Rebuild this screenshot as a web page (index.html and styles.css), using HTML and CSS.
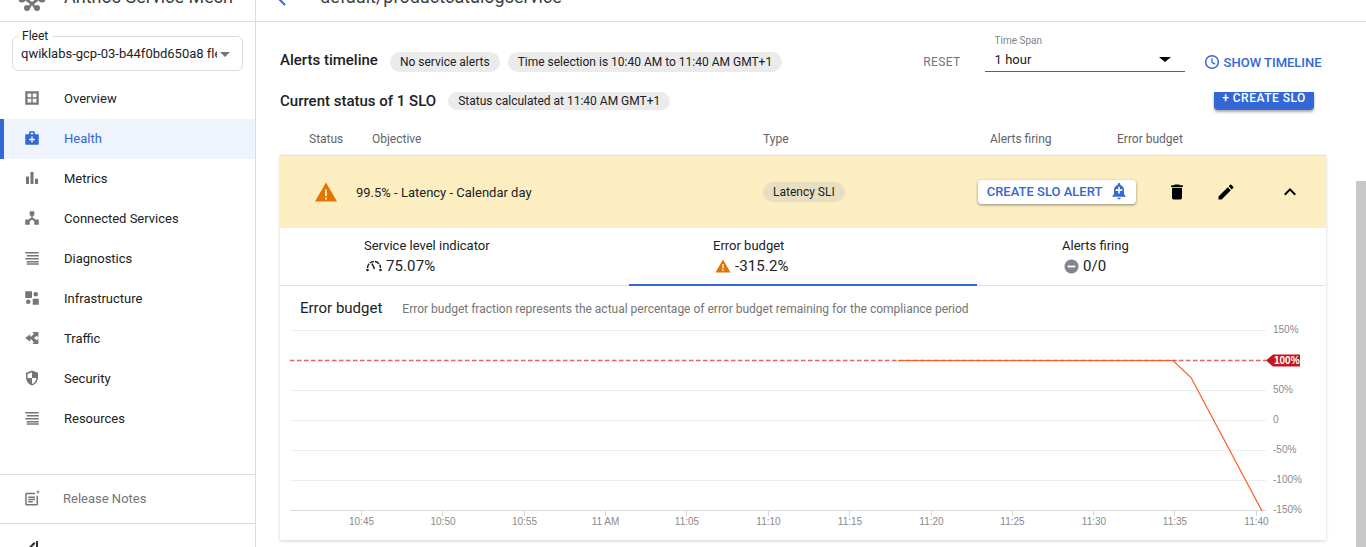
FILE: index.html
```html
<!DOCTYPE html>
<html lang="en">
<head>
<meta charset="utf-8">
<title>Anthos Service Mesh</title>
<link rel="stylesheet" href="styles.css">
</head>
<body>
<div class="app">
  <aside class="sidebar">
    <div class="side-head">
      <svg class="logo" viewBox="0 0 30 14" width="30" height="14"><g fill="#757575"><circle cx="5" cy="1" r="3.5"/><circle cx="25" cy="1" r="3.5"/><circle cx="10" cy="10" r="3"/><circle cx="20" cy="10" r="3"/><path d="M7-2 15 4l8-6 2 2-8 6 3 5-2 1-3-5-3 5-2-1 3-5-8-6z"/></g></svg>
      <span class="side-title">Anthos Service Mesh</span>
    </div>
    <div class="fleet">
      <span class="fleet-label">Fleet</span>
      <span class="fleet-value">qwiklabs-gcp-03-b44f0bd650a8 fleet</span>
      <span class="fleet-caret"></span>
    </div>
    <nav class="nav">
      <a class="nav-item"><svg class="ico" viewBox="0 0 24 24"><path d="M3 3v18h18V3H3zm3 3h5v5H6V6zm7 0h5v5h-5V6zm-7 7h5v5H6v-5zm7 0h5v5h-5v-5z" fill-rule="evenodd"/></svg>Overview</a>
      <a class="nav-item active"><svg class="ico" viewBox="0 0 24 24"><path fill-rule="evenodd" d="M20 7h-4V5c0-1.100-.9-2-2-2h-4c-1.100 0-2 .9-2 2v2H4c-.6 0-1 .4-1 1v12c0 .6.4 1 1 1h16c.6 0 1-.4 1-1V8c0-.6-.4-1-1-1zM10 5h4v2h-4V5zm6 10h-3v3h-2v-3H8v-2h3v-3h2v3h3v2z"/></svg>Health</a>
      <a class="nav-item"><svg class="ico" viewBox="0 0 24 24"><path d="M4 10h4v10H4zM10 4h4v16h-4zM16 13h4v7h-4z"/></svg>Metrics</a>
      <a class="nav-item"><svg class="ico" viewBox="0 0 24 24"><path d="M9 3h6v6h-2v2.500l5 3V14h3v7h-6v-5l-3-1.800L9 16v5H3v-7h3v.5l5-3V9H9z"/></svg>Connected Services</a>
      <a class="nav-item"><svg class="ico" viewBox="0 0 24 24"><path d="M3 4h18v2H3zM5 8h16v2H5zM3 12h18v2H3zM5 16h16v2H5zM5 19h16v2H5z"/></svg>Diagnostics</a>
      <a class="nav-item"><svg class="ico" viewBox="0 0 24 24"><path d="M3 3h9v9H3zM13 13h8v8h-8z"/><circle cx="17" cy="7" r="3"/><circle cx="7" cy="17" r="3"/></svg>Infrastructure</a>
      <a class="nav-item"><svg class="ico" viewBox="0 0 24 24"><path d="M3 12 9.500 7V10H11L14.500 6.500 12.500 4H20.500V11.500L18.500 9 14.500 12 18.500 15 20.500 12.500V20H12.500L14.500 17.500 11 14H9.500V17Z"/></svg>Traffic</a>
      <a class="nav-item"><svg class="ico" viewBox="0 0 24 24"><path fill-rule="evenodd" d="M12 2 4 5v6c0 5 3.400 9.700 8 11 4.600-1.300 8-6 8-11V5l-8-3zm0 10h6c-.5 3.700-3 7-6 8v-8H6V6.500l6-2.300V12z"/></svg>Security</a>
      <a class="nav-item"><svg class="ico" viewBox="0 0 24 24"><path d="M3 4h18v2H3zM5 8h16v2H5zM3 12h18v2H3zM5 16h16v2H5zM5 19h16v2H5z"/></svg>Resources</a>
    </nav>
    <a class="release"><svg class="ico" viewBox="0 0 24 24"><path fill-rule="evenodd" d="M3 5h13v2H5v13h13V9h2v11c0 1.100-.9 2-2 2H5c-1.100 0-2-.9-2-2V7c0-1.100.9-2 2-2zm4 5h9v2H7zm0 3h9v2H7zm0 3h6v2H7zM20 1l.8 2.200L23 4l-2.200.8L20 7l-.8-2.200L17 4l2.200-.8z"/></svg>Release Notes</a>
    <div class="collapse"><svg viewBox="0 0 24 24" width="24" height="24"><path d="M18 5v14h-2V5zM14 6l-7 7 1.500 1.500L15.500 7.500z" fill="#333"/></svg></div>
  </aside>

  <main class="main">
    <header class="topbar">
      <svg class="back" viewBox="0 0 10 14" width="10" height="14"><path d="M8 1 3 6l5 5" fill="none" stroke="#3367d6" stroke-width="2"/></svg>
      <span class="page-title">default/productcatalogservice</span>
    </header>
    <div class="content">
      <section class="row-alerts">
        <h2 class="h2 h2-alerts">Alerts timeline</h2>
        <span class="chip chip-a">No service alerts</span>
        <span class="chip chip-b">Time selection is 10:40 AM to 11:40 AM GMT+1</span>
        <span class="reset">RESET</span>
        <div class="timespan">
          <span class="ts-label">Time Span</span>
          <div class="ts-value"><span>1 hour</span><span class="ts-caret"></span></div>
        </div>
        <a class="show-timeline"><svg viewBox="0 0 24 24" width="16" height="16"><circle cx="12" cy="12" r="9.500" fill="none" stroke="#3367d6" stroke-width="2.200"/><path d="M12 6.500v6l4.500 2.700" fill="none" stroke="#3367d6" stroke-width="2"/></svg>SHOW TIMELINE</a>
      </section>
      <section class="row-status">
        <h2 class="h2">Current status of 1 SLO</h2>
        <span class="chip chip-c">Status calculated at 11:40 AM GMT+1</span>
        <div class="create-clip"><button class="create-slo">+ CREATE SLO</button></div>
      </section>
      <div class="thead">
        <span class="th th-status">Status</span>
        <span class="th th-obj">Objective</span>
        <span class="th th-type">Type</span>
        <span class="th th-alerts">Alerts firing</span>
        <span class="th th-budget">Error budget</span>
      </div>
      <section class="panel">
        <div class="slo-row">
          <svg class="warn" viewBox="0 0 24 22" width="24" height="22"><path d="M12 1.500 1 20.500h22z" fill="#e37400"/><path d="M11 8.500h2v6.500h-2zM11 16.500h2v2h-2z" fill="#fdeec2"/></svg>
          <span class="slo-name">99.5% - Latency - Calendar day</span>
          <span class="sli-chip">Latency SLI</span>
          <button class="alert-btn">CREATE SLO ALERT<svg viewBox="0 0 24 24" width="20" height="20"><path fill-rule="evenodd" fill="#3367d6" d="M12 22c1.100 0 2-.9 2-2h-4c0 1.100.9 2 2 2zm6-6v-5c0-3.100-1.600-5.600-4.500-6.300V4a1.500 1.500 0 0 0-3 0v.7C7.600 5.400 6 7.900 6 11v5l-2 2v1h16v-1l-2-2zm-2-4h-3v3h-2v-3H8v-2h3V7h2v3h3v2z"/></svg></button>
          <svg class="act act-trash" viewBox="0 0 24 24" width="20" height="20"><path d="M6 19c0 1.100.9 2 2 2h8c1.100 0 2-.9 2-2V7H6v12zM19 4h-3.500l-1-1h-5l-1 1H5v2h14V4z"/></svg>
          <svg class="act act-edit" viewBox="0 0 24 24" width="20" height="20"><path d="M3 17.250V21h3.750L17.810 9.940l-3.750-3.750L3 17.250zM20.710 7.040a1 1 0 0 0 0-1.410l-2.340-2.340a1 1 0 0 0-1.410 0l-1.830 1.830 3.750 3.750 1.830-1.830z"/></svg>
          <svg class="act act-up" viewBox="0 0 24 24" width="24" height="24"><path d="M7.410 15.410 12 10.830l4.590 4.580L18 14l-6-6-6 6z"/></svg>
        </div>
        <div class="tabs">
          <div class="tab">
            <span class="tab-label">Service level indicator</span>
            <span class="tab-value"><svg viewBox="0 0 16 14" width="16" height="14"><path d="M1.500 9A6.500 6.500 0 0 1 14.500 9" fill="none" stroke="#202124" stroke-width="1.500" stroke-dasharray="4.500 1"/><path d="M6 4.500 8.500 10" stroke="#202124" stroke-width="1.600"/><circle cx="1.500" cy="11" r="1.300" fill="#202124"/><circle cx="14.500" cy="11" r="1.300" fill="#202124"/></svg>75.07%</span>
          </div>
          <div class="tab tab-active">
            <span class="tab-label">Error budget</span>
            <span class="tab-value"><svg viewBox="0 0 16 14" width="16" height="14"><path d="M8 .5.500 13.500h15z" fill="#e37400"/><path d="M7.300 5h1.400v4.500H7.300zM7.300 10.500h1.400v1.500H7.300z" fill="#fff"/></svg>-315.2%</span>
          </div>
          <div class="tab tab-last">
            <span class="tab-label">Alerts firing</span>
            <span class="tab-value"><svg viewBox="0 0 16 16" width="15" height="15"><circle cx="8" cy="8" r="7.500" fill="#80868b"/><path d="M4 7h8v2H4z" fill="#fff"/></svg>0/0</span>
          </div>
        </div>
        <div class="chart-head">
          <span class="chart-title">Error budget</span>
          <span class="chart-desc">Error budget fraction represents the actual percentage of error budget remaining for the compliance period</span>
        </div>
        <svg class="chart" viewBox="0 0 1046 220" width="1046" height="220">
          <g class="grid">
            <path d="M10 10.500H986M10 70.500H986M10 100.500H986M10 130.500H986M10 160.500H986"/>
          </g>
          <path class="axis" d="M10 190.500H986"/>
          <path class="axis" d="M81.500 190v6M162.500 190v6M244.500 190v6M325.500 190v6M406.500 190v6M488.500 190v6M569.500 190v6M651.500 190v6M732.500 190v6M813.500 190v6M894.500 190v6M976.500 190v6"/>
          <path class="thresh" d="M10 40.500H986"/>
          <path class="series" d="M618 40.500H893L911 57.500L982 191"/>
          <path class="tag" d="M986 40.500l7-6h27v12h-27z"/>
          <text class="tag-text" x="994" y="44">100%</text>
          <g class="ylab">
            <text x="993" y="13">150%</text><text x="993" y="73">50%</text><text x="993" y="103">0</text><text x="993" y="133">-50%</text><text x="993" y="163">-100%</text><text x="993" y="193">-150%</text>
          </g>
          <g class="xlab">
            <text x="81.500" y="205">10:45</text><text x="163" y="205">10:50</text><text x="244.500" y="205">10:55</text><text x="325.500" y="205">11 AM</text><text x="407" y="205">11:05</text><text x="488.500" y="205">11:10</text><text x="570" y="205">11:15</text><text x="651.500" y="205">11:20</text><text x="732.500" y="205">11:25</text><text x="814" y="205">11:30</text><text x="895" y="205">11:35</text><text x="976.500" y="205">11:40</text>
          </g>
        </svg>
      </section>
    </div>
  </main>
  <div class="scrolltrack"><div class="scrollthumb"></div></div>
</div>
</body>
</html>
```

FILE: styles.css
```css
* { box-sizing: border-box; }
html, body { margin: 0; height: 100%; overflow: hidden; background: #fff; }
body { font-family: Roboto, "Liberation Sans", sans-serif; font-size: 13px; color: #202124; }
.app { display: flex; width: 1366px; height: 547px; overflow: hidden; }

.sidebar { width: 256px; flex: none; border-right: 1px solid #dadce0; display: flex; flex-direction: column; height: 547px; overflow: hidden; }
.side-head { height: 22px; flex: none; border-bottom: 1px solid #dadce0; display: flex; align-items: flex-end; overflow: hidden; padding: 0 0 13px 17px; gap: 17px; }
.logo { flex: none; overflow: visible; margin-bottom: -4px; }
.side-title { font-size: 18px; line-height: 22px; white-space: nowrap; color: #3c4043; }
.fleet { position: relative; margin: 14px 12px 0; width: 231px; height: 35px; border: 1px solid #dadce0; border-radius: 6px; display: flex; align-items: flex-start; padding: 9px 8px 0 8px; flex: none; }
.fleet-label { position: absolute; left: 5px; top: -9px; background: #fff; padding: 0 4px; font-size: 12px; line-height: 16px; color: #202124; }
.fleet-value { width: 196px; overflow: hidden; white-space: nowrap; font-size: 13px; line-height: 16px; font-variant-ligatures: none; }
.fleet-caret { margin: 6px 0 0 3px; border-style: solid; border-color: #757575 transparent transparent; border-width: 5px 5.500px 0; }
.nav { margin-top: 8px; flex: none; }
.nav-item { display: flex; align-items: center; height: 40px; padding: 0 0 2px 23px; gap: 23px; color: #202124; font-size: 13px; }
.nav-item.active { background: #eff3fc; color: #3367d6; box-shadow: inset 4px 0 0 #3367d6; }
.ico { width: 18px; height: 18px; fill: #757575; flex: none; }
.nav-item.active .ico { fill: #3367d6; }
.release { display: flex; align-items: center; gap: 22px; height: 50px; margin-top: 35px; padding: 0 0 2px 23px; border-top: 1px solid #dadce0; border-bottom: 1px solid #dadce0; color: #757575; flex: none; font-size: 13px; }
.collapse { padding: 12px 0 0 20px; }

.main { flex: 1; min-width: 0; display: flex; flex-direction: column; }
.topbar { height: 22px; flex: none; border-bottom: 1px solid #dadce0; display: flex; align-items: flex-end; overflow: hidden; padding: 0 0 13px 21px; gap: 33px; position: relative; }
.back { flex: none; }
.page-title { font-size: 18px; line-height: 22px; white-space: nowrap; color: #3c4043; }
.content { padding: 0 30px 0 24px; width: 1100px; }

.row-alerts { display: flex; align-items: center; height: 50px; margin-top: 15px; position: relative; }
.h2 { margin: 0; font-size: 15px; font-weight: 500; white-space: nowrap; line-height: 18px; }
.h2-alerts { margin-top: -4px; }
.chip { background: #ebebeb; border-radius: 10px; height: 20px; line-height: 20px; padding: 0 10px; font-size: 12px; white-space: nowrap; color: #202124; }
.chip-a { margin-left: 12px; }
.chip-b { margin-left: 8px; }
.reset { margin-left: 141px; color: #757575; font-size: 12px; letter-spacing: .4px; }
.timespan { margin-left: 24px; width: 200px; display: flex; flex-direction: column; align-self: flex-start; margin-top: -2px; }
.ts-label { font-size: 10px; line-height: 12px; color: #80868b; padding-left: 10px; margin-bottom: 2px; }
.ts-value { display: flex; justify-content: space-between; align-items: center; height: 23px; padding: 0 14px 2px 10px; font-size: 13px; border-bottom: 1px solid #616161; }
.ts-caret { border-style: solid; border-color: #000 transparent transparent; border-width: 5px 6px 0; }
.show-timeline { margin-left: 19px; display: flex; align-items: center; gap: 4px; color: #3367d6; font-size: 13px; font-weight: 500; white-space: nowrap; }
.show-timeline svg { flex: none; }

.row-status { display: flex; align-items: center; height: 22px; margin-top: 3px; position: relative; }
.chip-c { margin-left: 12px; height: 18px; line-height: 18px; }
.create-clip { position: absolute; left: 931px; top: 2px; width: 106px; height: 24px; overflow: hidden; padding: 0 3px; }
.create-slo { display: block; width: 100px; height: 18px; margin: 0; border: 0; padding: 0 0 6px; background: #3367d6; color: #fff; font: 500 12px/12px Roboto, sans-serif; letter-spacing: .5px; border-radius: 0 0 4px 4px; box-shadow: 0 2px 3px rgba(0,0,0,.35); overflow: hidden; white-space: nowrap; }

.thead { position: relative; height: 43px; }
.th { position: absolute; top: 19px; font-size: 12px; color: #5f6368; white-space: nowrap; line-height: 16px; }
.th-status { left: 29px; } .th-obj { left: 92px; } .th-type { left: 483px; } .th-alerts { left: 710px; } .th-budget { left: 837px; }

.panel { width: 1046px; box-shadow: 0 1px 3px rgba(60,64,67,.25); border-top: 1px solid #e4e4e4; }
.slo-row { height: 72px; background: #fdeec2; position: relative; display: flex; align-items: center; }
.warn { margin-left: 34px; flex: none; }
.slo-name { margin-left: 18px; width: 407px; font-size: 13px; white-space: nowrap; }
.sli-chip { background: #e8dfc2; border-radius: 10px; height: 20px; line-height: 20px; padding: 0 10px; font-size: 12px; white-space: nowrap; }
.alert-btn { margin-left: 133px; height: 24px; width: 158px; flex: none; display: flex; align-items: center; gap: 7px; border: 0; background: #fff; border-radius: 4px; color: #3367d6; font: 500 13px Roboto, sans-serif; box-shadow: 0 1px 3px rgba(60,64,67,.6); padding: 0 0 2px 9px; white-space: nowrap; }
.alert-btn svg { flex: none; }
.act { flex: none; fill: #000; }
.act-trash { margin-left: 31px; }
.act-edit { margin-left: 29px; }
.act-up { margin-left: 42px; }

.tabs { display: flex; height: 58px; border-bottom: 1px solid #e0e0e0; }
.tab { width: 349px; flex: none; display: flex; flex-direction: column; padding: 10px 0 0 84px; gap: 2px; }
.tab-active { width: 348px; border-bottom: 2px solid #3367d6; height: 58px; }
.tab-last { padding-left: 85px; }
.tab-label { font-size: 13px; line-height: 16px; }
.tab-value { display: flex; align-items: center; gap: 4px; font-size: 15px; line-height: 20px; letter-spacing: .1px; white-space: nowrap; }
.tab-value svg { flex: none; margin-left: 2px; }

.chart-head { display: flex; align-items: baseline; height: 29px; padding: 13px 0 0 20px; gap: 20px; }
.chart-title { font-size: 15px; line-height: 18px; white-space: nowrap; }
.chart-desc { font-size: 12px; color: #757575; white-space: nowrap; }
.chart { display: block; margin-top: 5px; }
.grid path { stroke: #eeeeee; fill: none; }
.axis { stroke: #d9d9d9; fill: none; }
.thresh { stroke: #e4626b; stroke-width: 1.400; stroke-dasharray: 4.500 2.500; fill: none; }
.series { stroke: #ff5a1f; stroke-width: 1.200; fill: none; }
.tag { fill: #c5161d; }
.tag-text { fill: #fff; font: 700 10px "Liberation Sans", Arial, sans-serif; }
.ylab text, .xlab text { font: 10px "Liberation Sans", Arial, sans-serif; fill: #8a8a8a; }
.xlab text { text-anchor: middle; }

.scrolltrack { position: absolute; left: 1356px; top: 181px; width: 10px; height: 366px; }
.scrollthumb { width: 100%; height: 100%; background: #c8c8c8; }
```
